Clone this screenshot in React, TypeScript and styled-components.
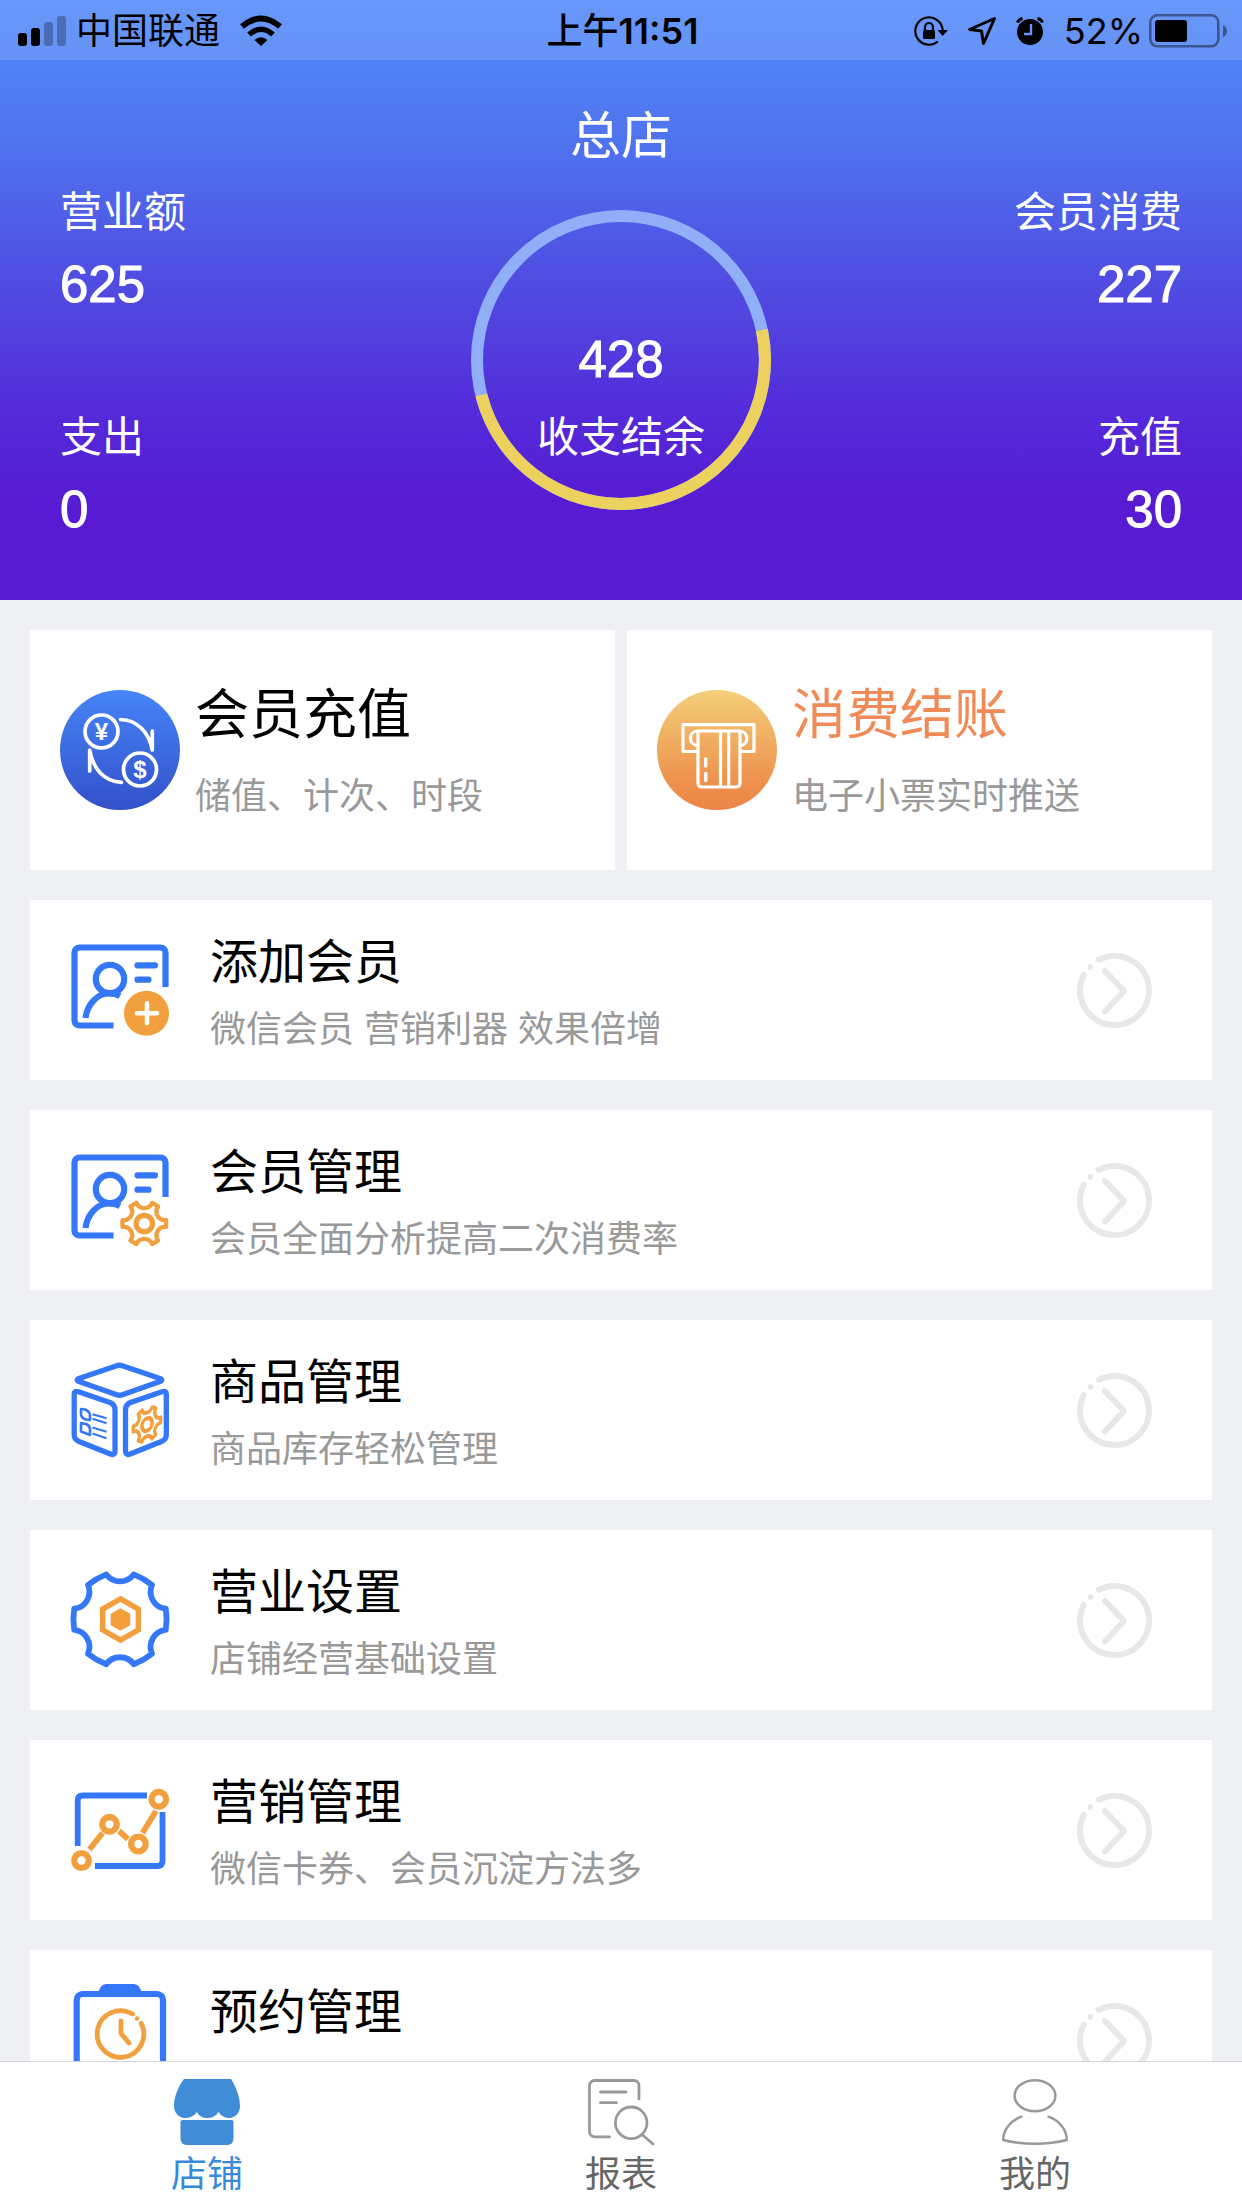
import React from "react";
import styled, { createGlobalStyle } from "styled-components";

const BLUE = "#3577f9";
const ORANGE = "#f2a03d";
const CJK = `"Noto Sans CJK SC", sans-serif`;

const GlobalStyle = createGlobalStyle`
  * { box-sizing: border-box; }
  body { margin: 0; background: #eff0f4; font-family: "Liberation Sans", ${CJK}; }
  h1, h2, p, ul, dl, dd { margin: 0; padding: 0; }
  a { color: inherit; text-decoration: none; }
  svg { display: block; flex: none; overflow: visible; }
`;

/* ---------- layout ---------- */

const Screen = styled.div`
  display: flex;
  flex-direction: column;
  height: 100vh;
  overflow: hidden;
`;

const Hero = styled.header`
  flex: none;
  color: #fff;
  background: linear-gradient(#5089f8 0, #5083f4 60px, #4f6fee 160px, #4f55e4 250px, #5143df 320px, #5429d9 420px, #581ad2 510px);
`;

const StatusBar = styled.div`
  display: grid;
  grid-template-columns: 1fr auto 1fr;
  align-items: center;
  height: 60px;
  padding: 2px 15px 0 18px;
  color: #000;
  background: rgba(255, 255, 255, 0.13);
  font: 400 36px/58px Inter, ${CJK};
`;

const StatusGroup = styled.div<{ $end?: boolean }>`
  display: flex;
  align-items: center;
  justify-content: ${(p) => (p.$end ? "flex-end" : "flex-start")};
  gap: 20px;
`;

const Carrier = styled.span`
  display: flex;
  align-items: center;
  gap: 10px;
`;

const Charge = styled.span`
  display: flex;
  align-items: center;
  gap: 6px;
`;

const Clock = styled.time`
  font-weight: 600;
`;

const Meridiem = styled.span`
  font-weight: 500;
`;

const Summary = styled.div`
  padding: 39px 60px 53px;
`;

const ShopName = styled.h1`
  height: 73px;
  font: 400 51px/76px "Liberation Sans", ${CJK};
  text-align: center;
`;

const Figures = styled.div`
  display: flex;
  align-items: center;
  justify-content: space-between;
`;

const Side = styled.dl<{ $end?: boolean }>`
  display: flex;
  flex: 1;
  flex-direction: column;
  gap: 75px;
  text-align: ${(p) => (p.$end ? "right" : "left")};
`;

const Label = styled.dt`
  padding-top: 6px;
  font-size: 42px;
  line-height: 69px;
`;

const Value = styled.dd`
  padding-top: 1px;
  font-size: 51px;
  line-height: 74px;
  -webkit-text-stroke: 1px currentColor;
`;

const Balance = styled.div`
  display: grid;
  place-items: center;
  width: 300px;
  height: 300px;

  > * { grid-area: 1 / 1; }
`;

const BalanceText = styled.dl`
  padding-top: 75px;
  text-align: center;
`;

const Content = styled.main`
  flex: 1;
  min-height: 0;
  overflow: auto;
  padding: 30px;
  scrollbar-width: none;
`;

const Shortcuts = styled.div`
  display: grid;
  grid-template-columns: 1fr 1fr;
  gap: 12px;
`;

const Shortcut = styled.a`
  display: flex;
  align-items: center;
  gap: 15px;
  height: 240px;
  padding: 0 30px;
  background: #fff;
`;

const ShortcutText = styled.div`
  padding-top: 10px;
`;

const ShortcutTitle = styled.h2<{ $accent?: boolean }>`
  color: ${(p) => (p.$accent ? "#f08b57" : "#000")};
  font-size: 54px;
  font-weight: 400;
  line-height: 84px;
`;

const Note = styled.p<{ $roomy?: boolean }>`
  color: #999;
  font-size: 36px;
  line-height: ${(p) => (p.$roomy ? "80px" : "62px")};
`;

const Menu = styled.ul`
  display: grid;
  gap: 30px;
  margin-top: 30px;
  list-style: none;
`;

const MenuLink = styled.a`
  display: flex;
  align-items: center;
  height: 180px;
  padding: 0 60px 0 40px;
  background: #fff;
`;

const MenuText = styled.div`
  flex: 1;
  padding: 8px 0 0 40px;
`;

const MenuTitle = styled.h2`
  font-size: 48px;
  font-weight: 400;
  line-height: 72px;
`;

const Tabs = styled.nav`
  display: grid;
  flex: none;
  grid-template-columns: repeat(3, 1fr);
  height: 147px;
  border-top: 1px solid #d6d6d6;
  background: #fff;
`;

const Tab = styled.a<{ $active?: boolean }>`
  display: flex;
  flex-direction: column;
  align-items: center;
  padding-top: 17px;
  color: ${(p) => (p.$active ? "#378ad9" : "#666")};
  font-size: 36px;
  line-height: 60px;
`;

/* ---------- drawings ---------- */

const pt = (cx: number, cy: number, r: number, deg: number) => {
  const a = (deg * Math.PI) / 180;
  return `${(cx + r * Math.cos(a)).toFixed(2)} ${(cy + r * Math.sin(a)).toFixed(2)}`;
};

/* Six-toothed cog: slightly bowed teeth joined by round notches. */
const cog = (cx: number, cy: number, r: number, half: number, notch: number) => {
  let d = "";
  for (let k = 0; k < 6; k++) {
    const mid = k * 60;
    d += `${k ? "" : "M" + pt(cx, cy, r, mid - half)}A${r * 1.5} ${r * 1.5} 0 0 1 ${pt(cx, cy, r, mid + half)}`;
    d += `A${notch} ${notch} 0 0 0 ${pt(cx, cy, r, mid + 60 - half)}`;
  }
  return d + "Z";
};

const hexagon = (cx: number, cy: number, r: number) =>
  "M" + [30, 90, 150, 210, 270, 330].map((a) => pt(cx, cy, r, a)).join("L") + "Z";

const arc = (cx: number, cy: number, r: number, from: number, to: number) =>
  `M${pt(cx, cy, r, from)}A${r} ${r} 0 ${to - from > 180 ? 1 : 0} 1 ${pt(cx, cy, r, to)}`;

const Signal = () => (
  <svg width="48" height="30" viewBox="0 0 48 30" aria-hidden="true">
    <rect x="0" y="17" width="9" height="13" rx="3" />
    <rect x="13" y="12" width="9" height="18" rx="3" />
    <rect x="26" y="6" width="9" height="24" rx="3" opacity=".27" />
    <rect x="39" y="0" width="9" height="30" rx="3" opacity=".27" />
  </svg>
);

const Wifi = () => (
  <svg width="42" height="30" viewBox="0 0 42 30" aria-hidden="true">
    <path d="M2 10.500Q21-5.500 40 10.500" fill="none" stroke="#000" strokeWidth="6" />
    <path d="M9 18.500Q21 8 33 18.500" fill="none" stroke="#000" strokeWidth="5.500" />
    <path d="M14.500 24Q21 18.500 27.500 24L21 30Z" />
  </svg>
);

const RotationLock = () => (
  <svg width="34" height="30" viewBox="0 0 34 30" fill="none" stroke="#000" strokeWidth="2.2" aria-hidden="true">
    <path d={arc(15, 15, 13.7, 50, 358)} />
    <path d="M23.500 14H34L28.700 20Z" fill="#000" stroke="none" />
    <rect x="9" y="14" width="12" height="9" rx="1.500" fill="#000" stroke="none" />
    <path d="M11 14V11a4 4 0 0 1 8 0V14" />
  </svg>
);

const Location = () => (
  <svg width="28" height="28" viewBox="0 0 28 28" fill="none" stroke="#000" strokeWidth="3" strokeLinejoin="round" aria-hidden="true">
    <path d="M26.500 1.500L1.500 12.500L13.500 14L15.500 26.500Z" />
  </svg>
);

const Alarm = () => (
  <svg width="28" height="28" viewBox="0 0 28 28" aria-hidden="true">
    <circle cx="14" cy="15" r="13" />
    <path d="M1.500 5.500Q3 2 6.500 1.500M26.500 5.500Q25 2 21.500 1.500" fill="none" stroke="#000" strokeWidth="3" />
    <path d="M15 7V17H8" fill="none" stroke="#6694f8" strokeWidth="2.4" />
  </svg>
);

const Battery = () => (
  <svg width="78" height="34" viewBox="0 0 78 34" aria-hidden="true">
    <rect x="1.300" y="1.300" width="68" height="31" rx="7" fill="none" stroke="#000" strokeOpacity=".42" strokeWidth="2.600" />
    <rect x="6" y="6" width="32" height="22" rx="3" />
    <path d="M74 11Q78 13 78 17T74 23Z" opacity=".42" />
  </svg>
);

const Ring = () => (
  <svg width="300" height="300" viewBox="0 0 300 300" fill="none" strokeWidth="12" aria-hidden="true">
    <circle cx="150" cy="150" r="144" stroke="#91aef8" />
    <path d={arc(150, 150, 144, -12, 166)} stroke="#edd15e" />
  </svg>
);

const RechargeIcon = () => (
  <svg width="120" height="120" viewBox="0 0 120 120" fill="none" stroke="#fff" strokeWidth="3.7" strokeLinecap="round" strokeLinejoin="round" aria-hidden="true">
    <linearGradient id="recharge" x2="0" y2="1">
      <stop stopColor="#4685f8" />
      <stop offset="1" stopColor="#3350c8" />
    </linearGradient>
    <circle cx="60" cy="60" r="60" fill="url(#recharge)" stroke="none" />
    <circle cx="41.500" cy="41.500" r="16.500" />
    <circle cx="80" cy="79.500" r="16.500" />
    <path d="M60.500 29.500C78 30 89 43 92.300 60V41M29.700 81V60C33 79 44 91.500 61.500 92.300" />
    <g fill="#fff" stroke="none" fontFamily="Liberation Sans, sans-serif" fontSize="24" fontWeight="700" textAnchor="middle">
      <text x="41.500" y="50">¥</text>
      <text x="80" y="88">$</text>
    </g>
  </svg>
);

const CheckoutIcon = () => (
  <svg width="120" height="120" viewBox="0 0 120 120" fill="none" stroke="#fff" strokeWidth="3.2" strokeLinecap="round" strokeLinejoin="round" aria-hidden="true">
    <linearGradient id="checkout" x2="0" y2="1">
      <stop stopColor="#f3cf79" />
      <stop offset=".8" stopColor="#ee8f4c" />
      <stop offset="1" stopColor="#ed8446" />
    </linearGradient>
    <circle cx="60" cy="60" r="60" fill="url(#checkout)" stroke="none" />
    <path d="M40 61.500H26V34.700H97V61.500H84" />
    <path d="M40 55.500C31 54 31 41 41 41H82C92 41 92 54 84 55.500" />
    <path d="M41 41V93q0 4 4 4H79q4 0 4-4V41M63.500 41V97M71.700 41V97" />
    <path d="M48.700 69V76M48.700 83.500V90.500" strokeWidth="3.500" />
  </svg>
);

const MenuSvg = ({ children }: { children: React.ReactNode }) => (
  <svg width="100" height="100" viewBox="0 0 100 100" fill="none" stroke={BLUE} strokeWidth="6.2" strokeLinejoin="round" aria-hidden="true">
    {children}
  </svg>
);

const MemberCard = () => (
  <>
    <path d="M43.500 85.500H9.500a5 5 0 0 1-5-5V12.500a5 5 0 0 1 5-5H90.500a5 5 0 0 1 5 5V47" />
    <circle cx="40" cy="39" r="14.200" />
    <path d="M15.500 78C17 65 27 53.500 38.500 53.500Q45 53.500 50 56" />
    <path d="M67.500 25.300H85M67.500 39.700H78.500" strokeLinecap="round" />
  </>
);

const AddMember = () => (
  <MenuSvg>
    <MemberCard />
    <circle cx="76.500" cy="73.300" r="22.500" fill={ORANGE} stroke="none" />
    <path d="M67 73.300H87M77 63.300V83.300" stroke="#fff" strokeWidth="4.500" strokeLinecap="round" />
  </MenuSvg>
);

const ManageMember = () => (
  <MenuSvg>
    <MemberCard />
    <g stroke={ORANGE}>
      <path d={cog(74.3, 73.5, 22, 9, 8.6)} strokeWidth="4.300" />
      <circle cx="74.300" cy="73.500" r="8.200" strokeWidth="5.200" />
    </g>
  </MenuSvg>
);

const FACE = "M8.500 31.800L40 42.500Q45 44.500 45 50V91Q45 95.500 41 94.300L9 81.500Q4.200 79.500 4.200 75V34Q4.200 30.300 8.500 31.800Z";

const Goods = () => (
  <MenuSvg>
    <path d="M46 6Q49.300 4.500 53 6L90 18.500Q93.500 20 90 21.500L53 34.500Q49.300 36 46 34.500L9 21.500Q5.500 20 9 18.500Z" strokeWidth="5.300" />
    <path d={FACE} strokeWidth="5.300" />
    <path d={FACE} strokeWidth="5.300" transform="matrix(-1 0 0 1 100.500 0)" />
    <g strokeWidth="2.600">
      <path d="M11 49L15 49.500Q20 51.500 20 55.500V60L16 59.500Q11 58 11 54ZM11 63L16 64Q20 66 20 69V75L11 71.500Z" />
      <path d="M22.500 54.300L36.500 58.300M22.500 58.800L36.500 63.300M22.500 67.500L36.500 71.700M22.500 73.500L36.500 78.300" strokeWidth="2.200" />
    </g>
    <g stroke={ORANGE} transform="translate(77 64.500) skewY(-18) scale(.68 .82)">
      <path d={cog(0, 0, 20.5, 9, 8)} strokeWidth="4.800" />
      <circle r="7.500" strokeWidth="5.400" />
    </g>
  </MenuSvg>
);

const Settings = () => (
  <MenuSvg>
    <path d={cog(50, 49.3, 47, 13, 17)} strokeWidth="5.800" />
    <path d={hexagon(50.5, 49.5, 20.6)} stroke={ORANGE} strokeLinejoin="miter" strokeWidth="5.500" />
    <path d={hexagon(50.5, 49.5, 11.3)} fill={ORANGE} stroke="none" />
  </MenuSvg>
);

const Marketing = () => (
  <MenuSvg>
    <path d="M7.700 66V20.500q0-5 5-5H77M92.500 32V81q0 5-5 5H25" strokeWidth="5.800" />
    <g stroke={ORANGE} strokeWidth="6.300">
      <circle cx="11.500" cy="80.500" r="7.300" />
      <circle cx="39.500" cy="44.300" r="7.300" />
      <circle cx="68.400" cy="64" r="7.300" />
      <circle cx="88.800" cy="19.300" r="7.300" />
      <path d="M19.500 69.500L32.500 53M49 51L58 59M72.500 53L86 31" strokeWidth="5.800" />
    </g>
  </MenuSvg>
);

const Booking = () => (
  <MenuSvg>
    <path d="M6.700 100V10a6 6 0 0 1 6-6H87a6 6 0 0 1 6 6V100Z" />
    <path d="M28 4Q30-6 36-6H64Q70-6 72 4Z" fill={BLUE} stroke="none" />
    <g stroke={ORANGE} strokeWidth="4.800" strokeLinecap="round">
      <path d={arc(50.5, 44, 23.3, -27, 301)} />
      <path d="M51 31V43.500L59 53" />
      <circle cx="67" cy="28.500" r="2.200" fill={ORANGE} stroke="none" />
    </g>
  </MenuSvg>
);

const Chevron = () => (
  <svg width="75" height="75" viewBox="0 0 75 75" fill="none" stroke="#e8e8e8" strokeWidth="6" strokeLinecap="round" strokeLinejoin="round" aria-hidden="true">
    <path d={arc(37.5, 37.5, 34.5, -117, 207)} />
    <path d="M28 18L47 38L28 58.500" />
    <circle cx="13.300" cy="14" r="2.800" fill="#e8e8e8" stroke="none" />
  </svg>
);

const ShopIcon = () => (
  <svg width="66" height="66" viewBox="0 0 66 66" fill="#418cd6" aria-hidden="true">
    <path d="M10 0H57C62 8 66 18 66 27C66 34 61 39 55.500 39C51 39 47 37 44.500 33C42 37 38 39 33.500 39C29 39 25 37 23 33C20 37 16 39 11 39C5 39 0 34 0 27C0 18 4 8 10 0Z" />
    <path d="M8.500 41H57.500a2 2 0 0 1 2 2V60a6 6 0 0 1-6 6H12.500a6 6 0 0 1-6-6V43a2 2 0 0 1 2-2Z" />
  </svg>
);

const ReportIcon = () => (
  <svg width="66" height="66" viewBox="0 0 66 66" fill="none" stroke="#999" strokeWidth="2.800" strokeLinecap="round" aria-hidden="true">
    <path d="M21.500 57.800H6.500a5 5 0 0 1-5-5V6.500a5 5 0 0 1 5-5H46a5 5 0 0 1 5 5V20" />
    <path d="M12.500 13H38M12.500 23.700H28.500M54.500 56L65 65" />
    <circle cx="43.200" cy="43.800" r="15.800" />
  </svg>
);

const MeIcon = () => (
  <svg width="66" height="66" viewBox="0 0 66 66" fill="none" stroke="#999" strokeWidth="2.500" strokeLinecap="round" strokeLinejoin="round" aria-hidden="true">
    <ellipse cx="33" cy="16.700" rx="20.400" ry="15.500" />
    <path d="M19.500 37.700C8 42 1.200 51 1.200 61C20 66 46 66 64.800 61C64.800 51 58 42 46.500 37.700" />
  </svg>
);

/* ---------- data ---------- */

const entries = [
  { title: "添加会员", note: "微信会员 营销利器 效果倍增", Icon: AddMember },
  { title: "会员管理", note: "会员全面分析提高二次消费率", Icon: ManageMember },
  { title: "商品管理", note: "商品库存轻松管理", Icon: Goods },
  { title: "营业设置", note: "店铺经营基础设置", Icon: Settings },
  { title: "营销管理", note: "微信卡券、会员沉淀方法多", Icon: Marketing },
  { title: "预约管理", note: "微信、会员预约省时省力", Icon: Booking },
];

const Stat = ({ label, value }: { label: string; value: number }) => (
  <div>
    <Label>{label}</Label>
    <Value>{value}</Value>
  </div>
);

export default function App() {
  return (
    <Screen>
      <GlobalStyle />
      <Hero>
        <StatusBar>
          <StatusGroup>
            <Carrier>
              <Signal />
              中国联通
            </Carrier>
            <Wifi />
          </StatusGroup>
          <Clock>
            <Meridiem>上午</Meridiem>11:51
          </Clock>
          <StatusGroup $end>
            <RotationLock />
            <Location />
            <Alarm />
            <Charge>
              52%
              <Battery />
            </Charge>
          </StatusGroup>
        </StatusBar>
        <Summary>
          <ShopName>总店</ShopName>
          <Figures>
            <Side>
              <Stat label="营业额" value={625} />
              <Stat label="支出" value={0} />
            </Side>
            <Balance>
              <Ring />
              <BalanceText>
                <Value>428</Value>
                <Label>收支结余</Label>
              </BalanceText>
            </Balance>
            <Side $end>
              <Stat label="会员消费" value={227} />
              <Stat label="充值" value={30} />
            </Side>
          </Figures>
        </Summary>
      </Hero>
      <Content>
        <Shortcuts>
          <Shortcut href="#recharge">
            <RechargeIcon />
            <ShortcutText>
              <ShortcutTitle>会员充值</ShortcutTitle>
              <Note $roomy>储值、计次、时段</Note>
            </ShortcutText>
          </Shortcut>
          <Shortcut href="#checkout">
            <CheckoutIcon />
            <ShortcutText>
              <ShortcutTitle $accent>消费结账</ShortcutTitle>
              <Note $roomy>电子小票实时推送</Note>
            </ShortcutText>
          </Shortcut>
        </Shortcuts>
        <Menu>
          {entries.map(({ title, note, Icon }) => (
            <li key={title}>
              <MenuLink href="#menu">
                <Icon />
                <MenuText>
                  <MenuTitle>{title}</MenuTitle>
                  <Note>{note}</Note>
                </MenuText>
                <Chevron />
              </MenuLink>
            </li>
          ))}
        </Menu>
      </Content>
      <Tabs>
        <Tab href="#shop" $active aria-current="page">
          <ShopIcon />
          店铺
        </Tab>
        <Tab href="#report">
          <ReportIcon />
          报表
        </Tab>
        <Tab href="#me">
          <MeIcon />
          我的
        </Tab>
      </Tabs>
    </Screen>
  );
}
